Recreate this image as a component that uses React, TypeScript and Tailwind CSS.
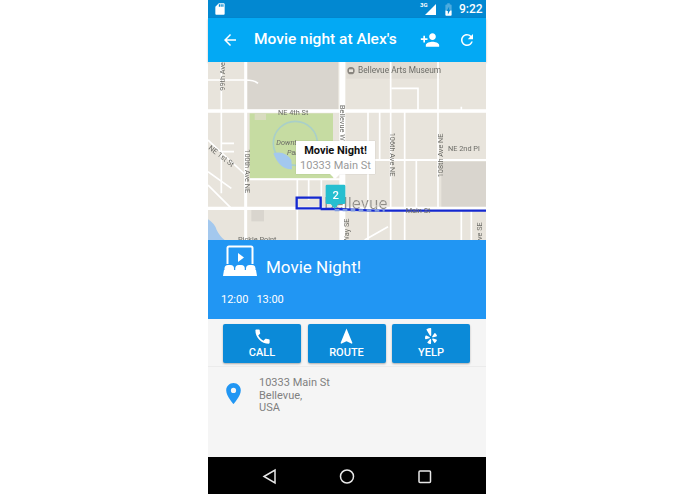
import { FaYelp } from "react-icons/fa";
import { MdArrowBack, MdBatteryCharging50, MdNavigation, MdPersonAdd, MdPhone, MdPlace, MdRefresh, MdSdStorage } from "react-icons/md";

const roboto = "font-['Roboto',sans-serif]";

function MapDrawing() {
  const label = { fontFamily: "Roboto, sans-serif", fill: "#6b6b66" };
  return (
    <svg viewBox="0 6 834 534" className="block h-full w-full blur-[0.4px]">
      <rect x="0" y="0" width="834" height="540" fill="#e8e4dc" />
      <rect x="118" y="6" width="272" height="142" fill="#d9d5ce" />
      <rect x="700" y="305" width="134" height="140" fill="#d9d5ce" />
      <rect x="415" y="6" width="280" height="50" fill="#e0dcd4" />
      <rect x="130" y="450" width="38" height="34" fill="#d9d5ce" />
      <rect x="125" y="160" width="250" height="195" fill="#c6dca2" />
      <rect x="140" y="160" width="34" height="20" fill="#d9dcc0" />
      <path d="M0 478 Q20 490 26 510 Q36 530 50 540 L0 540Z" fill="#a3c8ee" />
      <circle cx="262" cy="250" r="66" fill="none" stroke="#a9cfc8" strokeWidth="5" />
      <path d="M196 280 Q230 270 250 300 L252 328 Q215 330 196 280Z" fill="#a3c8ee" />
      <g stroke="#ffffff" fill="none">
        <path d="M0 153H834M0 445H834" strokeWidth="10" />
        <path d="M113 6V540" strokeWidth="9" />
        <path d="M403 6V540" strokeWidth="18" />
        <path d="M415 300H834M125 358H400" strokeWidth="6" />
        <path d="M40 6V400M548 6V540M690 6V445M480 153V540M515 153V300M590 153V540M625 300V445M268 358V540M302 358V420M340 358V420M760 445V540M790 450V540" strokeWidth="5" />
        <path d="M0 60H110Q140 60 150 70M550 85H630V150M0 240L113 345M0 375L70 445M0 335L70 385M40 250H78M40 275H78M760 140V153M470 540L540 500" strokeWidth="5" />
      </g>
      <text {...label} x="450" y="40" fontSize="25">Bellevue Arts Museum</text>
      <circle cx="429" cy="32" r="11" fill="#8a8680" />
      <rect x="423" y="28" width="12" height="8" fill="#e8e4dc" />
      <text {...label} x="210" y="164" fontSize="22">NE 4th St</text>
      <text {...label} x="720" y="274" fontSize="22">NE 2nd Pl</text>
      <text {...label} x="205" y="254" fontSize="22" fontStyle="italic">Downtown</text>
      <text {...label} x="237" y="284" fontSize="22" fontStyle="italic">Park</text>
      <text {...label} x="90" y="546" fontSize="22">Pickle Point</text>
      <text {...label} transform="translate(50 92) rotate(-90)" fontSize="22">99th Ave</text>
      <text {...label} transform="translate(397 135) rotate(90)" fontSize="22">Bellevue Way</text>
      <text {...label} transform="translate(112 268) rotate(90)" fontSize="22">100th Ave NE</text>
      <text {...label} transform="translate(545 218) rotate(90)" fontSize="22">106th Ave NE</text>
      <text {...label} transform="translate(706 352) rotate(-90)" fontSize="22">108th Ave NE</text>
      <text {...label} transform="translate(0 266) rotate(38)" fontSize="22">NE 1st St</text>
      <text {...label} transform="translate(424 548) rotate(-90)" fontSize="22">Way SE</text>
      <text {...label} transform="translate(822 540) rotate(-90)" fontSize="22">ve SE</text>
      <text x="348" y="448" fontFamily="Roboto, sans-serif" fontSize="51" fill="#8f8c85" stroke="#ffffff" strokeWidth="0.5">Bellevue</text>
      <path d="M266 413H338V445H266Z M338 447H380L500 452H834" fill="none" stroke="#1428d0" strokeWidth="7" />
      <path d="M380 450L530 452" stroke="#7f9be0" strokeWidth="7" strokeDasharray="14 10" />
      <text {...label} x="593" y="459" fontSize="22">Main St</text>
      <path d="M353 378Q353 374 357 374H408Q412 374 412 378V428Q412 432 408 432H392L380 446L368 432H357Q353 432 353 428Z" fill="#26bfd0" />
      <text x="383" y="416" textAnchor="middle" fontFamily="Roboto, sans-serif" fontSize="34" fontWeight="500" fill="#ffffff">2</text>
    </svg>
  );
}

function TheaterIcon() {
  return (
    <svg viewBox="0 0 34 31" className="h-[31px] w-[34px]" fill="white">
      <path d="M4.500 19V3Q4.500 1.500 6 1.500H28Q29.500 1.500 29.500 3V19" fill="none" stroke="white" strokeWidth="2" />
      <path d="M15 8L21 12.500L15 17Z" />
      <rect x="1.500" y="20" width="9.500" height="8" rx="3.500" />
      <rect x="12.250" y="20" width="9.500" height="8" rx="3.500" />
      <rect x="23" y="20" width="9.500" height="8" rx="3.500" />
      <path d="M0 31L1 25H33L34 31Z" />
    </svg>
  );
}

function ActionButton({ icon, label }: { icon: React.ReactNode; label: string }) {
  return (
    <button className="flex h-[39px] w-[78px] flex-col items-center justify-start rounded-[2px] bg-[#0b8ad8] pt-[4px] text-white shadow-[0_1px_2px_rgba(0,0,0,0.3)]">
      <span className="flex h-[16px] items-center justify-center">{icon}</span>
      <span className="mt-[2px] text-[11px] leading-[14px] font-medium">{label}</span>
    </button>
  );
}

export default function App() {
  return (
    <div className={`h-[494px] w-[695px] bg-white ${roboto}`}>
      <div className="ml-[208px] flex h-full w-[278px] flex-col bg-[#f5f5f5]">
        {/* status bar */}
        <div className="flex h-[18px] items-center bg-[#0288d1] pr-[2px] pl-[5px] text-white">
          <MdSdStorage className="h-[14px] w-[14px]" />
          <div className="ml-auto flex items-center">
            <span className="relative h-[14px] w-[14px]">
              <svg viewBox="0 0 14 14" className="absolute inset-0 h-full w-full">
                <path d="M13 2V13H2Z" fill="white" />
              </svg>
              <span className="absolute top-[-1px] left-[-3px] text-[6px] leading-[8px] font-bold">3G</span>
            </span>
            <MdBatteryCharging50 className="ml-[4px] h-[15px] w-[15px]" />
            <span className="ml-[3px] w-[25px] text-[12px] leading-[14px] font-medium">9:22</span>
          </div>
        </div>

        {/* toolbar */}
        <div className="flex h-[44px] items-center bg-[#03a9f4] text-white shadow-[0_1px_2px_rgba(0,0,0,0.25)]">
          <MdArrowBack className="ml-[13px] h-[18px] w-[18px]" />
          <span className="ml-[15px] text-[15.500px] font-medium">Movie night at Alex's</span>
          <MdPersonAdd className="ml-auto h-[20px] w-[20px]" />
          <MdRefresh className="mr-[10px] ml-[18px] h-[18px] w-[18px]" />
        </div>

        {/* map */}
        <div className="relative h-[178px] overflow-hidden">
          <MapDrawing />
          <div className="absolute top-[79px] left-[88px] flex h-[33px] w-[79px] flex-col items-center justify-center bg-white text-[11px] leading-[15px] shadow-[0_0_1px_rgba(0,0,0,0.2)]">
            <span className="font-bold text-[#111111]">Movie Night!</span>
            <span className="text-[#9a9a9a]">10333 Main St</span>
            <span className="absolute top-[33px] left-[34px] h-0 w-0 border-x-[5px] border-t-[5px] border-x-transparent border-t-white" />
          </div>
        </div>

        {/* event header */}
        <div className="h-[79px] bg-[#2196f3] text-white">
          <div className="flex items-start pt-[5px] pl-[15px]">
            <TheaterIcon />
            <span className="mt-[10px] ml-[9px] text-[17px] leading-[24px]">Movie Night!</span>
          </div>
          <div className="mt-[14px] flex gap-[8px] pl-[13px] text-[11px] leading-[14px]">
            <span>12:00</span>
            <span>13:00</span>
          </div>
        </div>

        {/* actions */}
        <div className="flex h-[48px] items-start gap-[6.500px] border-b border-[#ebebeb] pt-[5px] pl-[15px]">
          <ActionButton icon={<MdPhone className="h-[19px] w-[19px]" />} label="CALL" />
          <ActionButton icon={<MdNavigation className="h-[19px] w-[19px]" />} label="ROUTE" />
          <ActionButton icon={<FaYelp className="h-[16px] w-[16px]" />} label="YELP" />
        </div>

        {/* address */}
        <div className="flex flex-1 items-start pt-[10px]">
          <MdPlace className="mt-[4px] ml-[13px] h-[25px] w-[25px] text-[#2196f3]" />
          <div className="ml-[13px] text-[11px] leading-[12.500px] text-[#808080]">
            <div>10333 Main St</div>
            <div>Bellevue,</div>
            <div>USA</div>
          </div>
        </div>

        {/* nav bar */}
        <div className="flex h-[37px] items-center bg-black">
          <svg viewBox="0 0 278 37" className="h-full w-full" fill="none" stroke="#e8e8e8" strokeWidth="1.500">
            <path d="M56 19.500L67 13V26Z" />
            <circle cx="139" cy="19.500" r="6.500" />
            <rect x="211" y="14" width="11.500" height="11.500" rx="1" />
          </svg>
        </div>
      </div>
    </div>
  );
}
